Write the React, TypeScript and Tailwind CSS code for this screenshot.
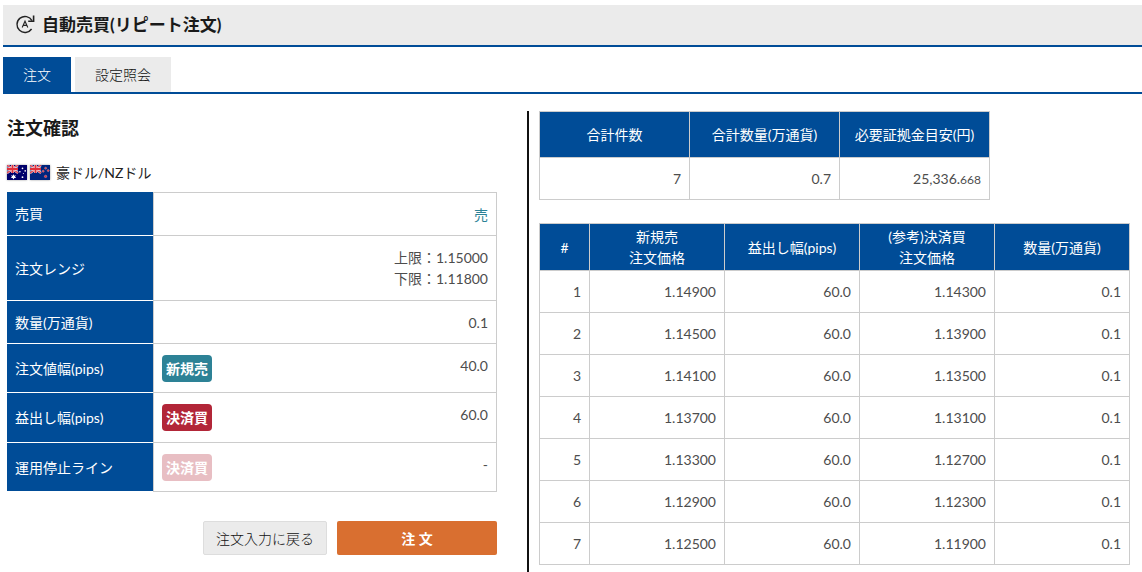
import React from "react";

const BLUE_TH = "border border-[#ccc] bg-[#004c97] px-2 font-normal text-white";
const CELL = "border border-[#ccc] px-2 text-right";

function RepeatIcon() {
  return (
    <svg viewBox="0 0 20 20" className="h-5 w-5" fill="none" stroke="#222" strokeWidth="1.4" aria-hidden="true">
      <path d="M17 6.6A8 8 0 1 0 16.6 15" />
      <path d="M13.2 7.2h5.4V1.6" strokeWidth="1.6" />
      <path d="M7.2 13.4 10 7.2l2.8 6.2M8.2 11.4h3.6" strokeWidth="1.1" />
    </svg>
  );
}

function UnionJack() {
  return (
    <g>
      <path d="M0 0 11 8M11 0 0 8" stroke="#f3d5dc" strokeWidth="2.2" />
      <path d="M0 0 11 8M11 0 0 8" stroke="#e0404a" strokeWidth="1.2" />
      <path d="M5.5 0v8M0 4h11" stroke="#fff" strokeWidth="2.8" />
      <path d="M5.5 0v8M0 4h11" stroke="#e0303a" strokeWidth="2" />
    </g>
  );
}

function FlagAU() {
  return (
    <svg viewBox="0 0 20 15" className="h-[15px] w-5 shadow-[0_0_2px_#999]" role="img" aria-label="豪ドル">
      <rect width="20" height="15" fill="#00006b" />
      <UnionJack />
      <path d="m6.5 9 .7 1.7 1.8-.4-1 1.5 1.2 1.3-1.8 0-.9 1.5-.9-1.5-1.8 0L5 11.8l-1-1.5 1.8.4z" fill="#fff" />
      <g fill="#fff">
        <circle cx="15.5" cy="3.4" r=".8" />
        <circle cx="12.9" cy="6.8" r=".8" />
        <circle cx="18.2" cy="5.9" r=".8" />
        <circle cx="16.4" cy="8.4" r=".5" />
        <circle cx="15.5" cy="12.2" r=".9" />
      </g>
    </svg>
  );
}

function FlagNZ() {
  return (
    <svg viewBox="0 0 20 15" className="h-[15px] w-5 shadow-[0_0_2px_#999]" role="img" aria-label="NZドル">
      <rect width="20" height="15" fill="#00247d" />
      <UnionJack />
      <g fill="#e0303a" stroke="#f3b5bc" strokeWidth=".4">
        <circle cx="15.6" cy="3.2" r="1" />
        <circle cx="13.2" cy="6.2" r="1" />
        <circle cx="18.2" cy="5.6" r="1" />
        <circle cx="15.6" cy="11.4" r="1.2" />
      </g>
    </svg>
  );
}

function Badge({ className, children }: { className: string; children: React.ReactNode }) {
  return (
    <span className={`h-[27px] rounded px-1 font-bold leading-[27px] text-white ${className}`}>{children}</span>
  );
}

function DetailRow({
  label,
  height,
  badge,
  first,
  children,
}: {
  label: string;
  height: string;
  badge?: React.ReactNode;
  first?: boolean;
  children: React.ReactNode;
}) {
  return (
    <tr className={height}>
      <th scope="row" className="w-[146px] border-b border-white bg-[#004c97] px-2 text-left font-normal text-white">
        {label}
      </th>
      <td className={`border-x border-b border-[#ccc] px-2 text-right ${first ? "border-t" : ""}`}>
        {badge ? (
          <div className="flex items-start justify-between">
            {badge}
            <span>{children}</span>
          </div>
        ) : (
          children
        )}
      </td>
    </tr>
  );
}

const orders = [
  ["1.14900", "1.14300"],
  ["1.14500", "1.13900"],
  ["1.14100", "1.13500"],
  ["1.13700", "1.13100"],
  ["1.13300", "1.12700"],
  ["1.12900", "1.12300"],
  ["1.12500", "1.11900"],
];

export default function App() {
  return (
    <div
      lang="ja"
      className="flex min-h-screen flex-col bg-white pl-[3px] pt-[5px] font-['Lato','Noto_Sans_CJK_JP',sans-serif] text-[14px] leading-[21px] text-[#4d4d4d]"
    >
      <header className="flex h-[42px] items-center gap-[7px] border-b-2 border-[#004c97] bg-[#ebebeb] pb-[2px] pl-3 text-[#1a1a1a]">
        <RepeatIcon />
        <h1 className="text-[17px] font-bold">自動売買(リピート注文)</h1>
      </header>

      <nav className="mt-[10px] flex gap-1 border-b-2 border-[#004c97] font-light">
        <a href="#order" aria-current="page" className="flex h-[35px] items-center bg-[#004c97] px-5 text-white">
          注文
        </a>
        <a href="#settings" className="flex h-[35px] items-center bg-[#ebebeb] px-5 text-[#111]">
          設定照会
        </a>
      </nav>

      <main className="mt-[17px] grid flex-1 grid-cols-[526fr_613fr]">
        <section className="border-r-2 border-[#111] pl-1 pr-[30px]">
          <h2 className="mt-[5px] text-[18px] font-bold leading-6 text-[#1a1a1a]">注文確認</h2>
          <div className="mb-[9px] mt-[22px] flex items-center gap-[3px] text-[#222]">
            <FlagAU />
            <FlagNZ />
            <span className="pl-[3px]">豪ドル/NZドル</span>
          </div>
          <table className="w-full table-fixed border-separate border-spacing-0">
            <tbody>
              <DetailRow label="売買" height="h-11" first>
                <span className="text-[#2d8296]">売</span>
              </DetailRow>
              <DetailRow label="注文レンジ" height="h-[65px]">
                上限：1.15000
                <br />
                下限：1.11800
              </DetailRow>
              <DetailRow label="数量(万通貨)" height="h-[43px]">
                0.1
              </DetailRow>
              <DetailRow label="注文値幅(pips)" height="h-[49px]" badge={<Badge className="bg-[#2d8296]">新規売</Badge>}>
                40.0
              </DetailRow>
              <DetailRow label="益出し幅(pips)" height="h-[50px]" badge={<Badge className="bg-[#b22638]">決済買</Badge>}>
                60.0
              </DetailRow>
              <DetailRow label="運用停止ライン" height="h-[49px]" badge={<Badge className="bg-[#e8bec3]">決済買</Badge>}>
                -
              </DetailRow>
            </tbody>
          </table>
          <div className="mt-[29px] flex justify-end gap-[10px]">
            <button type="button" className="h-[34px] rounded-[2px] border border-[#ddd] bg-[#ebebeb] px-3 font-light text-[#111]">
              注文入力に戻る
            </button>
            <button type="button" className="h-[34px] w-[160px] rounded-[2px] bg-[#d96f30] font-bold text-white">
              注 文
            </button>
          </div>
        </section>

        <section className="pl-[10px] pr-3">
          <table className="w-[451px] table-fixed border-collapse">
            <thead>
              <tr className="h-[46px]">
                <th scope="col" className={BLUE_TH}>合計件数</th>
                <th scope="col" className={BLUE_TH}>合計数量(万通貨)</th>
                <th scope="col" className={BLUE_TH}>必要証拠金目安(円)</th>
              </tr>
            </thead>
            <tbody>
              <tr className="h-[42px]">
                <td className={CELL}>7</td>
                <td className={CELL}>0.7</td>
                <td className={CELL}>
                  25,336.<span className="text-[12px]">668</span>
                </td>
              </tr>
            </tbody>
          </table>

          <table className="mt-[23px] w-full table-fixed border-collapse">
            <thead>
              <tr className="h-[47px]">
                <th scope="col" className={`w-[50px] ${BLUE_TH}`}>#</th>
                <th scope="col" className={BLUE_TH}>
                  新規売
                  <br />
                  注文価格
                </th>
                <th scope="col" className={BLUE_TH}>益出し幅(pips)</th>
                <th scope="col" className={BLUE_TH}>
                  (参考)決済買
                  <br />
                  注文価格
                </th>
                <th scope="col" className={BLUE_TH}>数量(万通貨)</th>
              </tr>
            </thead>
            <tbody>
              {orders.map(([entry, exit], i) => (
                <tr key={entry} className="h-[42px]">
                  <td className={CELL}>{i + 1}</td>
                  <td className={CELL}>{entry}</td>
                  <td className={CELL}>60.0</td>
                  <td className={CELL}>{exit}</td>
                  <td className={CELL}>0.1</td>
                </tr>
              ))}
            </tbody>
          </table>
        </section>
      </main>
    </div>
  );
}
